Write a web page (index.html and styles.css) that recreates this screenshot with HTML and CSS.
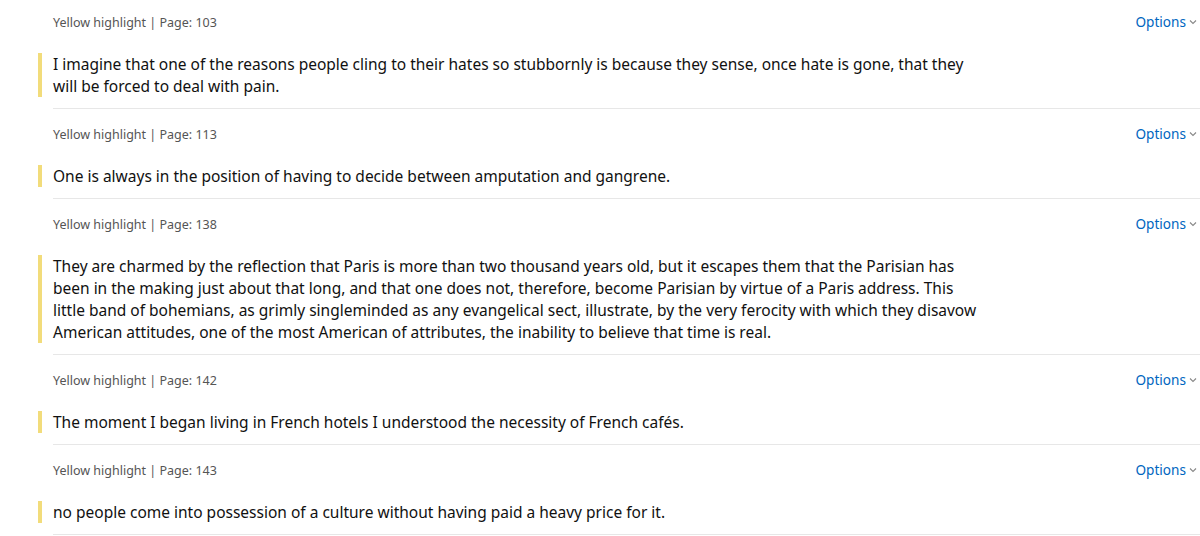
FILE: index.html
```html
<!DOCTYPE html>
<html lang="en">
<head>
<meta charset="utf-8">
<title>Highlights</title>
<link rel="stylesheet" href="styles.css">
</head>
<body>
<div class="list">
  <div class="row">
    <div class="meta">
      <span class="label">Yellow highlight | Page: 103</span>
      <a class="options" href="#">Options <svg class="chev" width="8" height="6" viewBox="0 0 8 6"><path d="M1 1.5 L4 4.5 L7 1.5" fill="none" stroke="#888" stroke-width="1.1"/></svg></a>
    </div>
    <p class="quote">I imagine that one of the reasons people cling to their hates so stubbornly is because they sense, once hate is gone, that they will be forced to deal with pain.</p>
  </div>
  <div class="row">
    <div class="meta">
      <span class="label">Yellow highlight | Page: 113</span>
      <a class="options" href="#">Options <svg class="chev" width="8" height="6" viewBox="0 0 8 6"><path d="M1 1.5 L4 4.5 L7 1.5" fill="none" stroke="#888" stroke-width="1.1"/></svg></a>
    </div>
    <p class="quote">One is always in the position of having to decide between amputation and gangrene.</p>
  </div>
  <div class="row">
    <div class="meta">
      <span class="label">Yellow highlight | Page: 138</span>
      <a class="options" href="#">Options <svg class="chev" width="8" height="6" viewBox="0 0 8 6"><path d="M1 1.5 L4 4.5 L7 1.5" fill="none" stroke="#888" stroke-width="1.1"/></svg></a>
    </div>
    <p class="quote">They are charmed by the reflection that Paris is more than two thousand years old, but it escapes them that the Parisian has been in the making just about that long, and that one does not, therefore, become Parisian by virtue of a Paris address. This little band of bohemians, as grimly singleminded as any evangelical sect, illustrate, by the very ferocity with which they disavow American attitudes, one of the most American of attributes, the inability to believe that time is real.</p>
  </div>
  <div class="row">
    <div class="meta">
      <span class="label">Yellow highlight | Page: 142</span>
      <a class="options" href="#">Options <svg class="chev" width="8" height="6" viewBox="0 0 8 6"><path d="M1 1.5 L4 4.5 L7 1.5" fill="none" stroke="#888" stroke-width="1.1"/></svg></a>
    </div>
    <p class="quote">The moment I began living in French hotels I understood the necessity of French cafés.</p>
  </div>
  <div class="row">
    <div class="meta">
      <span class="label">Yellow highlight | Page: 143</span>
      <a class="options" href="#">Options <svg class="chev" width="8" height="6" viewBox="0 0 8 6"><path d="M1 1.5 L4 4.5 L7 1.5" fill="none" stroke="#888" stroke-width="1.1"/></svg></a>
    </div>
    <p class="quote">no people come into possession of a culture without having paid a heavy price for it.</p>
  </div>
</div>
</body>
</html>
```
FILE: styles.css
```css
html, body {
  margin: 0;
  padding: 0;
  background: #ffffff;
}
body {
  font-family: "Noto Sans", "Open Sans", Arial, sans-serif;
  color: #111111;
}
.list {
  margin-left: 53px;
}
.row {
  padding: 15px 0 11px;
  border-bottom: 1px solid #e7e7e7;
}
.row:first-child {
  padding-top: 12px;
}
.meta {
  display: flex;
  justify-content: space-between;
  align-items: center;
  height: 20px;
  padding-right: 3px;
}
.label {
  font-size: 12.5px;
  color: #555555;
  line-height: 20px;
  padding-top: 1px;
}
.options {
  font-size: 13.6px;
  color: #0066c0;
  text-decoration: none;
  line-height: 20px;
  display: flex;
  align-items: center;
  gap: 3px;
}
.chev {
  display: block;
}
.quote {
  margin: 21px 0 0 -15px;
  padding-left: 11px;
  border-left: 4px solid #f2dc7b;
  font-size: 15.5px;
  line-height: 22px;
  max-width: 925px;
}
```
